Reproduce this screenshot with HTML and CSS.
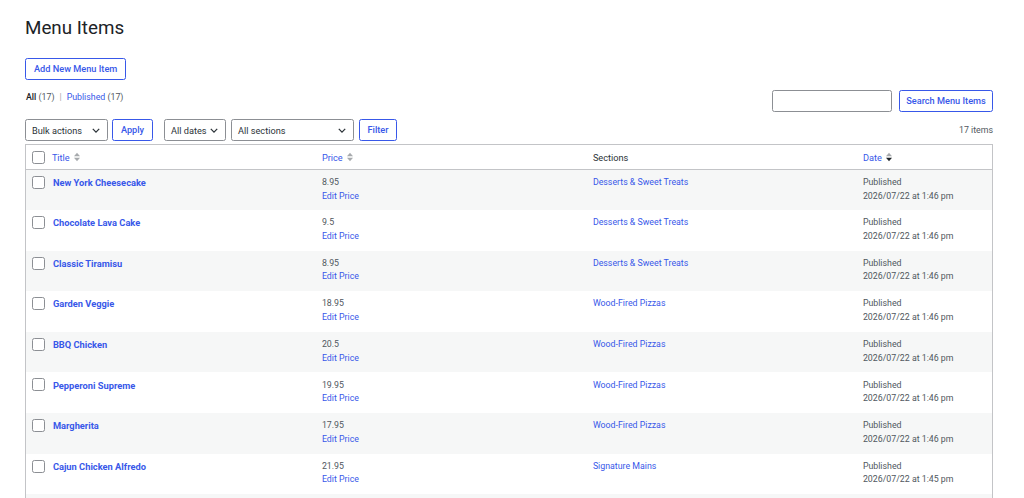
FILE: index.html
```html
<html>
	<head>
		<link rel="stylesheet" href="styles.css">
	</head>
	<body>
		<div class="wrap">
			<h1 class="page-title">Menu Items</h1>
			<a class="btn add-new" href="#">Add New Menu Item</a>

			<div class="top-row">
				<ul class="subsubsub">
					<li class="current">All <span class="count">(17)</span></li>
					<li class="sep">|</li>
					<li><a href="#">Published</a> <span class="count">(17)</span></li>
				</ul>
				<div class="search-box">
					<input class="search-input" type="text" />
					<a class="btn search-btn" href="#">Search Menu Items</a>
				</div>
			</div>

			<div class="tablenav">
				<div class="fake-select bulk">Bulk actions <svg class="chev" viewBox="0 0 10 6"><path d="M1 1l4 4 4-4" /></svg></div>
				<a class="btn apply" href="#">Apply</a>
				<div class="fake-select dates">All dates <svg class="chev" viewBox="0 0 10 6"><path d="M1 1l4 4 4-4" /></svg></div>
				<div class="fake-select sections">All sections <svg class="chev" viewBox="0 0 10 6"><path d="M1 1l4 4 4-4" /></svg></div>
				<a class="btn filter" href="#">Filter</a>
				<div class="num-items">17 items</div>
			</div>

			<table class="list-table">
				<thead>
					<tr>
						<th class="col-cb"><span class="cb"></span></th>
						<th class="col-title"><a href="#">Title <svg class="sort" viewBox="0 0 6 10"><path class="up" d="M0 4.2L3 0.8 6 4.2z" /><path class="down" d="M0 5.8L3 9.2 6 5.8z" /></svg></a></th>
						<th class="col-price"><a href="#">Price <svg class="sort" viewBox="0 0 6 10"><path class="up" d="M0 4.2L3 0.8 6 4.2z" /><path class="down" d="M0 5.8L3 9.2 6 5.8z" /></svg></a></th>
						<th class="col-sections">Sections</th>
						<th class="col-date"><a href="#">Date <svg class="sort sorted" viewBox="0 0 6 10"><path class="up" d="M0 4.2L3 0.8 6 4.2z" /><path class="down" d="M0 5.8L3 9.2 6 5.8z" /></svg></a></th>
					</tr>
				</thead>
				<tbody>
					<tr>
						<td class="col-cb"><span class="cb"></span></td>
						<td class="col-title"><a href="#">New York Cheesecake</a></td>
						<td>8.95<br /><a href="#">Edit Price</a></td>
						<td><a href="#">Desserts &amp; Sweet Treats</a></td>
						<td>Published<br />2026/07/22 at 1:46 pm</td>
					</tr>
					<tr>
						<td class="col-cb"><span class="cb"></span></td>
						<td class="col-title"><a href="#">Chocolate Lava Cake</a></td>
						<td>9.5<br /><a href="#">Edit Price</a></td>
						<td><a href="#">Desserts &amp; Sweet Treats</a></td>
						<td>Published<br />2026/07/22 at 1:46 pm</td>
					</tr>
					<tr>
						<td class="col-cb"><span class="cb"></span></td>
						<td class="col-title"><a href="#">Classic Tiramisu</a></td>
						<td>8.95<br /><a href="#">Edit Price</a></td>
						<td><a href="#">Desserts &amp; Sweet Treats</a></td>
						<td>Published<br />2026/07/22 at 1:46 pm</td>
					</tr>
					<tr>
						<td class="col-cb"><span class="cb"></span></td>
						<td class="col-title"><a href="#">Garden Veggie</a></td>
						<td>18.95<br /><a href="#">Edit Price</a></td>
						<td><a href="#">Wood-Fired Pizzas</a></td>
						<td>Published<br />2026/07/22 at 1:46 pm</td>
					</tr>
					<tr>
						<td class="col-cb"><span class="cb"></span></td>
						<td class="col-title"><a href="#">BBQ Chicken</a></td>
						<td>20.5<br /><a href="#">Edit Price</a></td>
						<td><a href="#">Wood-Fired Pizzas</a></td>
						<td>Published<br />2026/07/22 at 1:46 pm</td>
					</tr>
					<tr>
						<td class="col-cb"><span class="cb"></span></td>
						<td class="col-title"><a href="#">Pepperoni Supreme</a></td>
						<td>19.95<br /><a href="#">Edit Price</a></td>
						<td><a href="#">Wood-Fired Pizzas</a></td>
						<td>Published<br />2026/07/22 at 1:46 pm</td>
					</tr>
					<tr>
						<td class="col-cb"><span class="cb"></span></td>
						<td class="col-title"><a href="#">Margherita</a></td>
						<td>17.95<br /><a href="#">Edit Price</a></td>
						<td><a href="#">Wood-Fired Pizzas</a></td>
						<td>Published<br />2026/07/22 at 1:46 pm</td>
					</tr>
					<tr>
						<td class="col-cb"><span class="cb"></span></td>
						<td class="col-title"><a href="#">Cajun Chicken Alfredo</a></td>
						<td>21.95<br /><a href="#">Edit Price</a></td>
						<td><a href="#">Signature Mains</a></td>
						<td>Published<br />2026/07/22 at 1:45 pm</td>
					</tr>
					<tr>
						<td class="col-cb"><span class="cb"></span></td>
						<td class="col-title"><a href="#">Chicken Parmesan</a></td>
						<td>19.95<br /><a href="#">Edit Price</a></td>
						<td><a href="#">Signature Mains</a></td>
						<td>Published<br />2026/07/22 at 1:45 pm</td>
					</tr>
				</tbody>
			</table>
		</div>
	</body>
</html>
```

FILE: styles.css
```css
body,
html {
	margin: 0;
	background-color: #ffffff;
	color: #50575e;
	font-family: Roboto, "Noto Sans", sans-serif;
	font-size: 8.8px;
}

a {
	color: #3858e9;
	text-decoration: none;
}

.wrap {
	padding: 0 31px 0 25px;
}

.page-title {
	margin: 0;
	padding: 16px 0 0;
	font-size: 18.8px;
	font-weight: 400;
	line-height: 24px;
	color: #1d2327;
}

.btn {
	display: inline-block;
	box-sizing: border-box;
	height: 22px;
	line-height: 20px;
	padding: 0 8px;
	border: 1px solid #3858e9;
	border-radius: 2.4px;
	background-color: #ffffff;
	color: #3858e9;
	font-size: 9.2px;
	font-weight: 500;
	white-space: nowrap;
}

.add-new {
	margin-top: 18px;
}

.top-row {
	display: flex;
	justify-content: space-between;
	margin-top: 10px;
}

.subsubsub {
	display: flex;
	gap: 4px;
	list-style: none;
	margin: 0 0 0 1px;
	padding: 0;
	line-height: 14px;
}

.subsubsub .current {
	color: #1d2327;
	font-weight: 500;
}

.subsubsub .count {
	color: #50575e;
	font-weight: 400;
}

.subsubsub .sep {
	color: #a7aaad;
	padding: 0 1px;
}

.search-box {
	display: flex;
	gap: 7px;
}

.search-input {
	box-sizing: border-box;
	width: 120px;
	height: 22px;
	border: 1px solid #8c8f94;
	border-radius: 2.4px;
	margin: 0;
}

.search-btn {
	width: 94px;
	padding: 0;
	text-align: center;
}

.tablenav {
	display: flex;
	align-items: center;
	margin-top: 7px;
	height: 22px;
}

.fake-select {
	display: flex;
	align-items: center;
	justify-content: space-between;
	box-sizing: border-box;
	height: 22px;
	padding: 0 7px 0 6px;
	border: 1px solid #8c8f94;
	border-radius: 2.4px;
	color: #2c3338;
	background-color: #ffffff;
	font-size: 9.2px;
	white-space: nowrap;
}

.chev {
	width: 8px;
	height: 5px;
	fill: none;
	stroke: #2c3338;
	stroke-width: 1.6;
}

.bulk {
	width: 83px;
}

.apply {
	width: 41px;
	margin-left: 4px;
	text-align: center;
	padding: 0;
}

.dates {
	width: 62px;
	margin-left: 11px;
}

.sections {
	width: 123px;
	margin-left: 5px;
}

.filter {
	width: 38px;
	margin-left: 5px;
	text-align: center;
	padding: 0;
}

.num-items {
	margin-left: auto;
	color: #50575e;
}

.list-table {
	width: 100%;
	margin-top: 3px;
	border: 1px solid #c3c4c7;
	border-collapse: collapse;
	table-layout: fixed;
	font-size: 8.8px;
	color: #50575e;
}

.list-table th,
.list-table td {
	box-sizing: border-box;
}

.list-table th {
	height: 25px;
	padding: 0 6.4px;
	text-align: left;
	font-size: 9.2px;
	font-weight: 400;
	color: #2c3338;
	border-bottom: 1px solid #c3c4c7;
}

.list-table td {
	height: 40.6px;
	padding: 6.2px 6.4px 6px;
	vertical-align: top;
	line-height: 13.6px;
}

.list-table tbody tr:nth-child(odd) {
	background-color: #f6f7f7;
}

.list-table .col-cb {
	width: 20px;
	padding: 0 0 0 6px;
}

.list-table td.col-cb {
	padding-top: 6px;
}

.list-table .col-title {
	width: 270px;
}

.list-table .col-price {
	width: 271px;
}

.list-table .col-sections {
	width: 270px;
}

.list-table td.col-title a {
	font-size: 9.3px;
	font-weight: 700;
	margin-left: 1px;
}

.cb {
	display: block;
	box-sizing: border-box;
	width: 13px;
	height: 13px;
	border: 1px solid #8c8f94;
	border-radius: 2.4px;
	background-color: #ffffff;
}

.sort {
	width: 6px;
	height: 10px;
	margin-left: 2px;
	vertical-align: -1px;
}

.sort path {
	fill: #a7aaad;
}

.sort.sorted .down {
	fill: #1d2327;
}
```
